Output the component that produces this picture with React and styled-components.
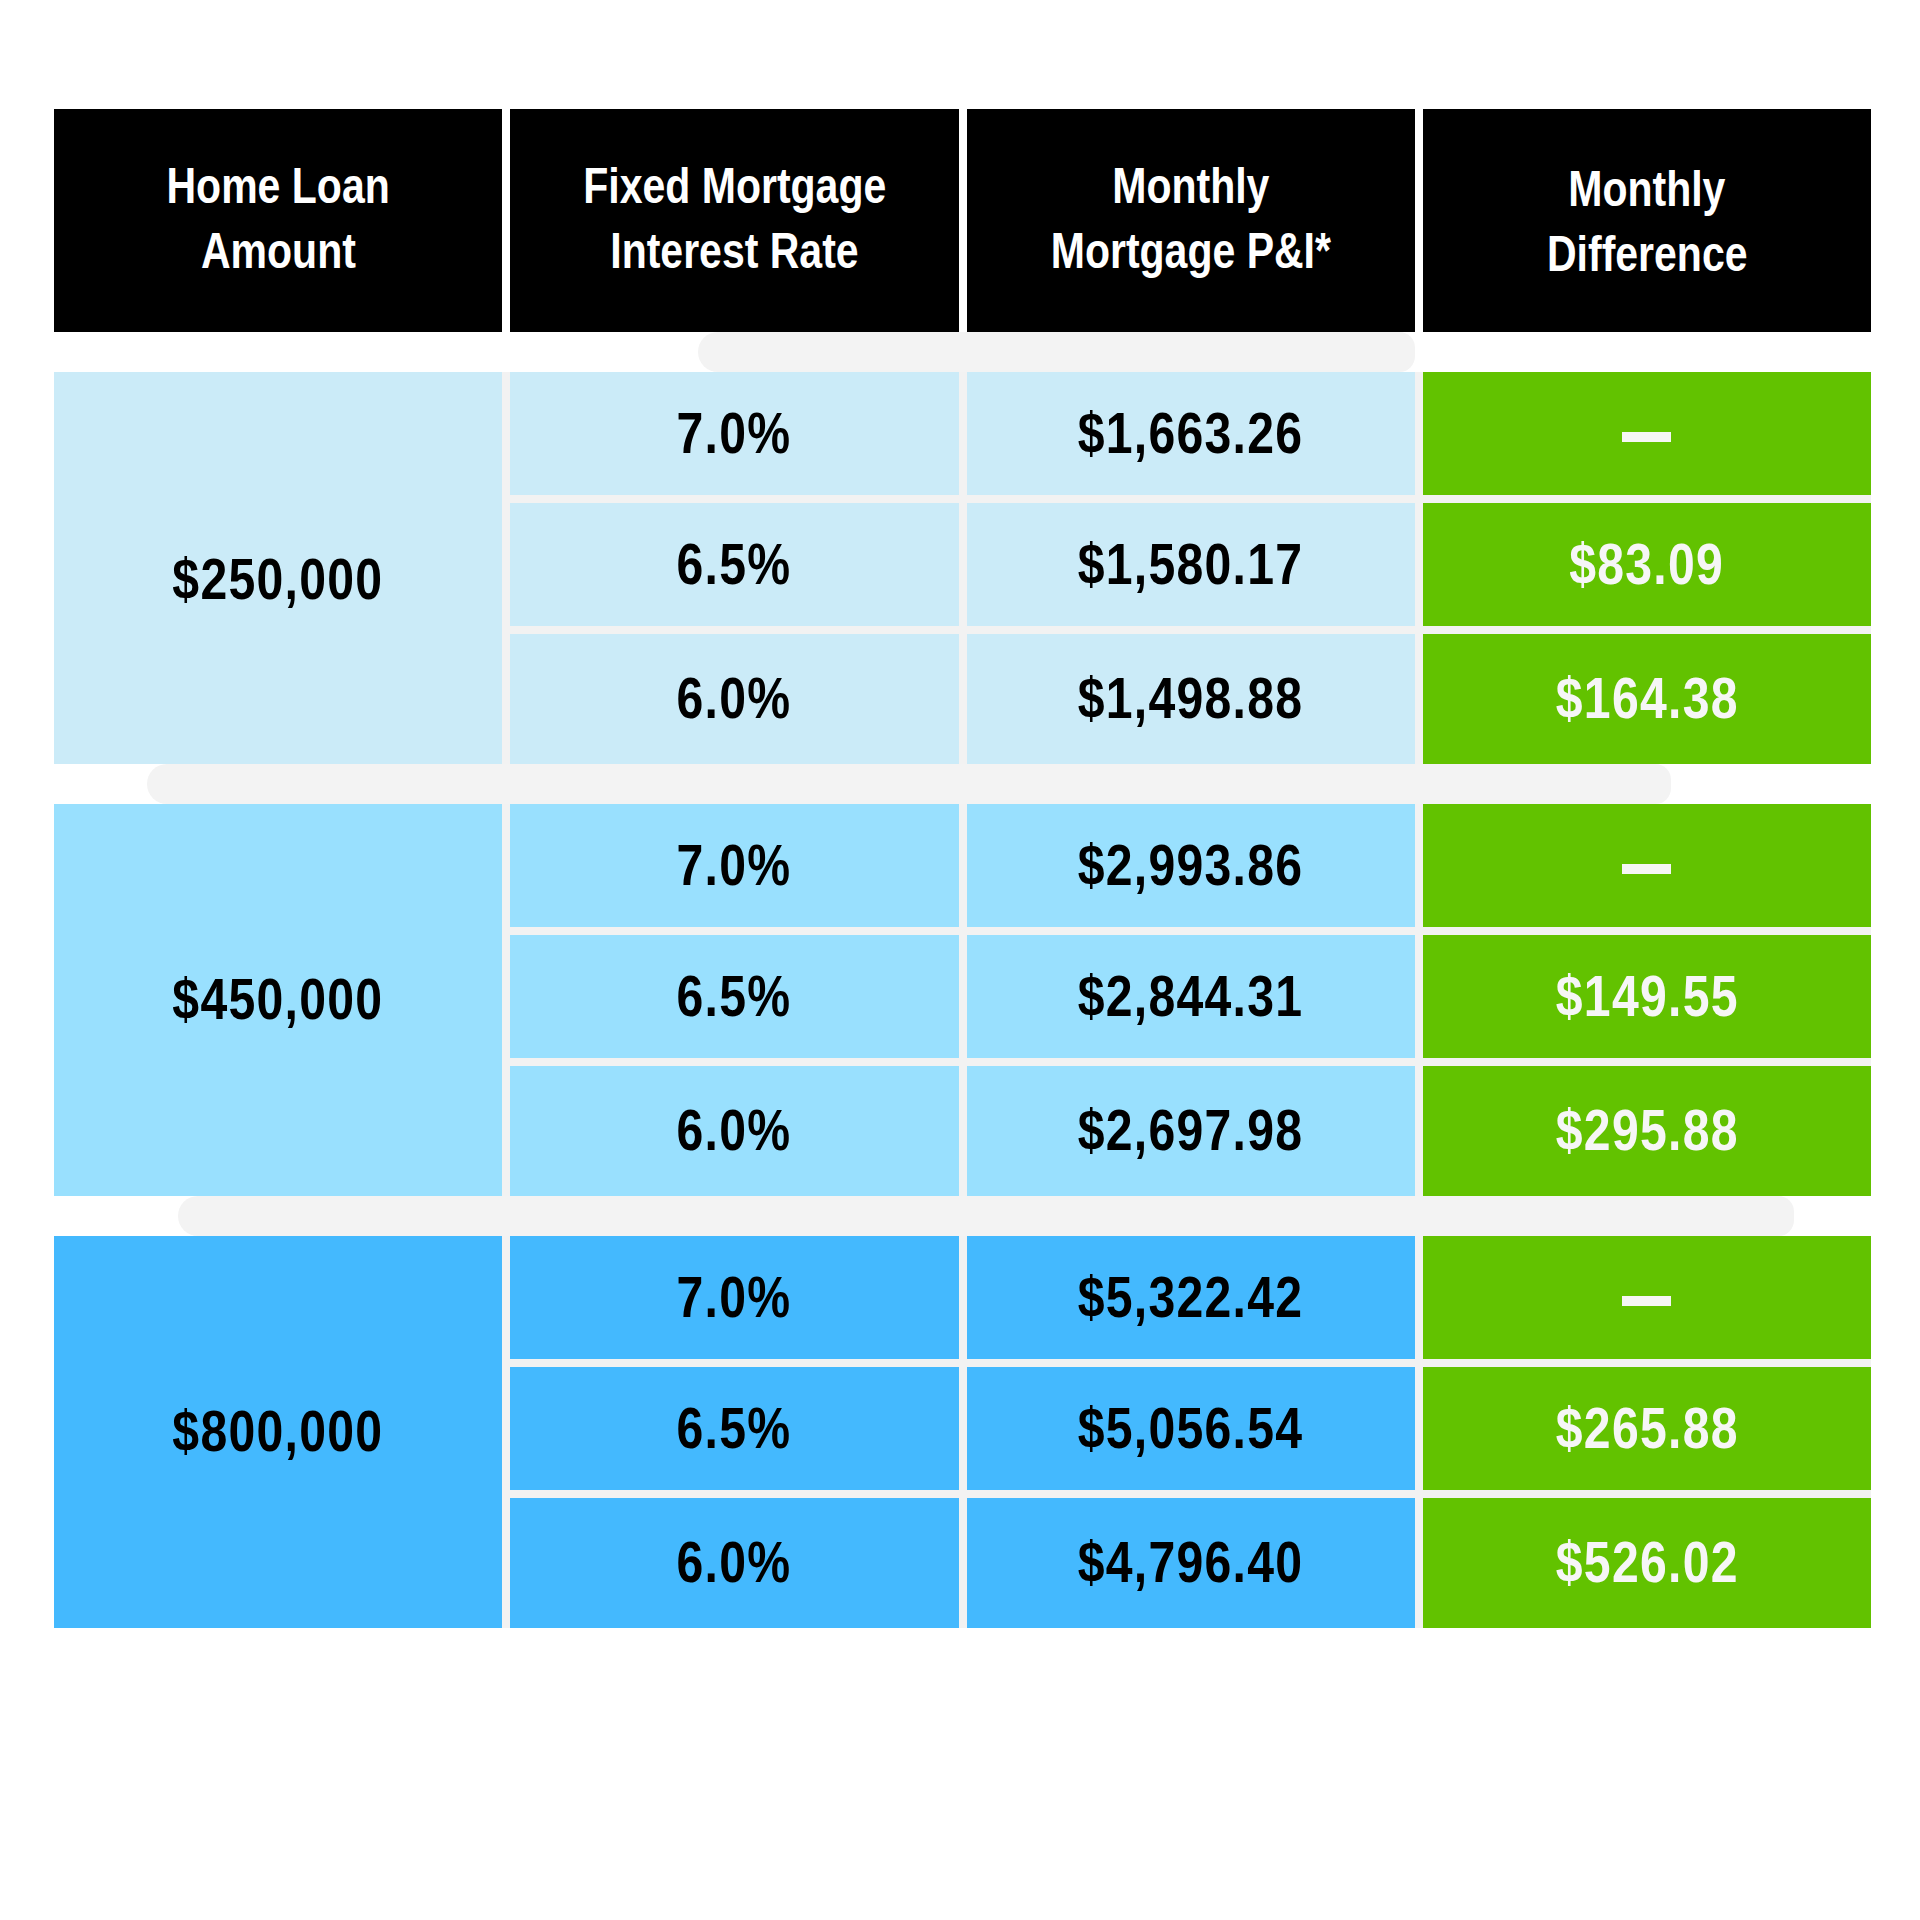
import React from 'react'
import styled, { createGlobalStyle } from 'styled-components'

const GlobalStyle = createGlobalStyle`
  body {
    margin: 0;
    background: #ffffff;
    font-family: "Liberation Sans", Arial, sans-serif;
  }
`

const headers = [
  { lines: ['Home Loan', 'Amount'] },
  { lines: ['Fixed Mortgage', 'Interest Rate'] },
  { lines: ['Monthly', 'Mortgage P&I*'] },
  { lines: ['Monthly', 'Difference'], shift: 7 },
]

const groups = [
  {
    amount: '$250,000',
    bg: '#cbebf8',
    shift: 24,
    rows: [
      ['7.0%', '$1,663.26', null],
      ['6.5%', '$1,580.17', '$83.09'],
      ['6.0%', '$1,498.88', '$164.38'],
    ],
  },
  {
    amount: '$450,000',
    bg: '#99e0fe',
    shift: 0,
    rows: [
      ['7.0%', '$2,993.86', null],
      ['6.5%', '$2,844.31', '$149.55'],
      ['6.0%', '$2,697.98', '$295.88'],
    ],
  },
  {
    amount: '$800,000',
    bg: '#44b9fe',
    shift: 0,
    rows: [
      ['7.0%', '$5,322.42', null],
      ['6.5%', '$5,056.54', '$265.88'],
      ['6.0%', '$4,796.40', '$526.02'],
    ],
  },
]

// the grey strips that show through between the blocks
const bands = [
  { left: 644, width: 717 },
  { left: 93, width: 1524 },
  { left: 124, width: 1616 },
]

const App = () => {
  return (
    <>
      <GlobalStyle />
      <Page>
        <Table>
          <HeaderRow>
            {headers.map((h, i) => (
              <HeadCell key={i} $shift={h.shift || 0}>
                {h.lines.map((l) => (
                  <Narrow key={l} $squeeze={0.82}>{l}</Narrow>
                ))}
              </HeadCell>
            ))}
          </HeaderRow>
          {groups.map((g, gi) => (
            <React.Fragment key={g.amount}>
              <Band $left={bands[gi].left} $width={bands[gi].width} />
              <Group>
                <AmountCell $bg={g.bg} $shift={g.shift}>
                  <Narrow>{g.amount}</Narrow>
                </AmountCell>
                {g.rows.map(([rate, pay, diff]) => (
                  <React.Fragment key={rate}>
                    <Cell $bg={g.bg}>
                      <Narrow>{rate}</Narrow>
                    </Cell>
                    <Cell $bg={g.bg}>
                      <Narrow>{pay}</Narrow>
                    </Cell>
                    <DiffCell>
                      {diff ? <Narrow>{diff}</Narrow> : <Dash aria-label="—" />}
                    </DiffCell>
                  </React.Fragment>
                ))}
              </Group>
            </React.Fragment>
          ))}
        </Table>
      </Page>
    </>
  )
}

export default App

const Page = styled.div`
  width: 1920px;
  min-height: 1920px;
  padding: 109px 0 0 54px;
  box-sizing: border-box;
  background: #ffffff;
`

const Table = styled.div`
  width: 1817px;
  display: flex;
  flex-direction: column;
`

// condensed face: Liberation Sans squeezed the way Arial Narrow is
const Narrow = styled.span`
  display: inline-block;
  white-space: nowrap;
  transform: scaleX(${(p) => p.$squeeze || 0.845});
  transform-origin: center;
`

const HeaderRow = styled.div`
  display: grid;
  grid-template-columns: repeat(4, 1fr);
  gap: 8px;
  height: 223px;
`

const HeadCell = styled.div`
  background: #000000;
  color: #ffffff;
  display: flex;
  flex-direction: column;
  align-items: center;
  justify-content: center;
  text-align: center;
  font-size: 50px;
  font-weight: 700;
  line-height: 65px;
  padding-top: ${(p) => p.$shift}px;
  padding-bottom: 4px;
  box-sizing: border-box;
`

const Band = styled.div`
  height: 40px;
  margin-left: ${(p) => p.$left}px;
  width: ${(p) => p.$width}px;
  background: #f3f3f3;
  border-radius: 28px 22px 22px 28px;
`

const Group = styled.div`
  display: grid;
  grid-template-columns: repeat(4, 1fr);
  grid-template-rows: 123px 123px 130px;
  gap: 8px;
  background: #f2f2f2;
`

const Cell = styled.div`
  background: ${(p) => p.$bg};
  color: #000000;
  display: flex;
  align-items: center;
  justify-content: center;
  font-size: 57px;
  font-weight: 700;
  letter-spacing: 1.5px;
  padding-bottom: 2px;
`

const AmountCell = styled(Cell)`
  grid-row: 1 / span 3;
  padding-top: ${(p) => p.$shift}px;
`

const DiffCell = styled(Cell)`
  background: #62c200;
  color: #f6f6f6;
`

const Dash = styled.span`
  display: block;
  width: 49px;
  height: 10px;
  margin-top: 8px;
  background: #f6f6f6;
`
